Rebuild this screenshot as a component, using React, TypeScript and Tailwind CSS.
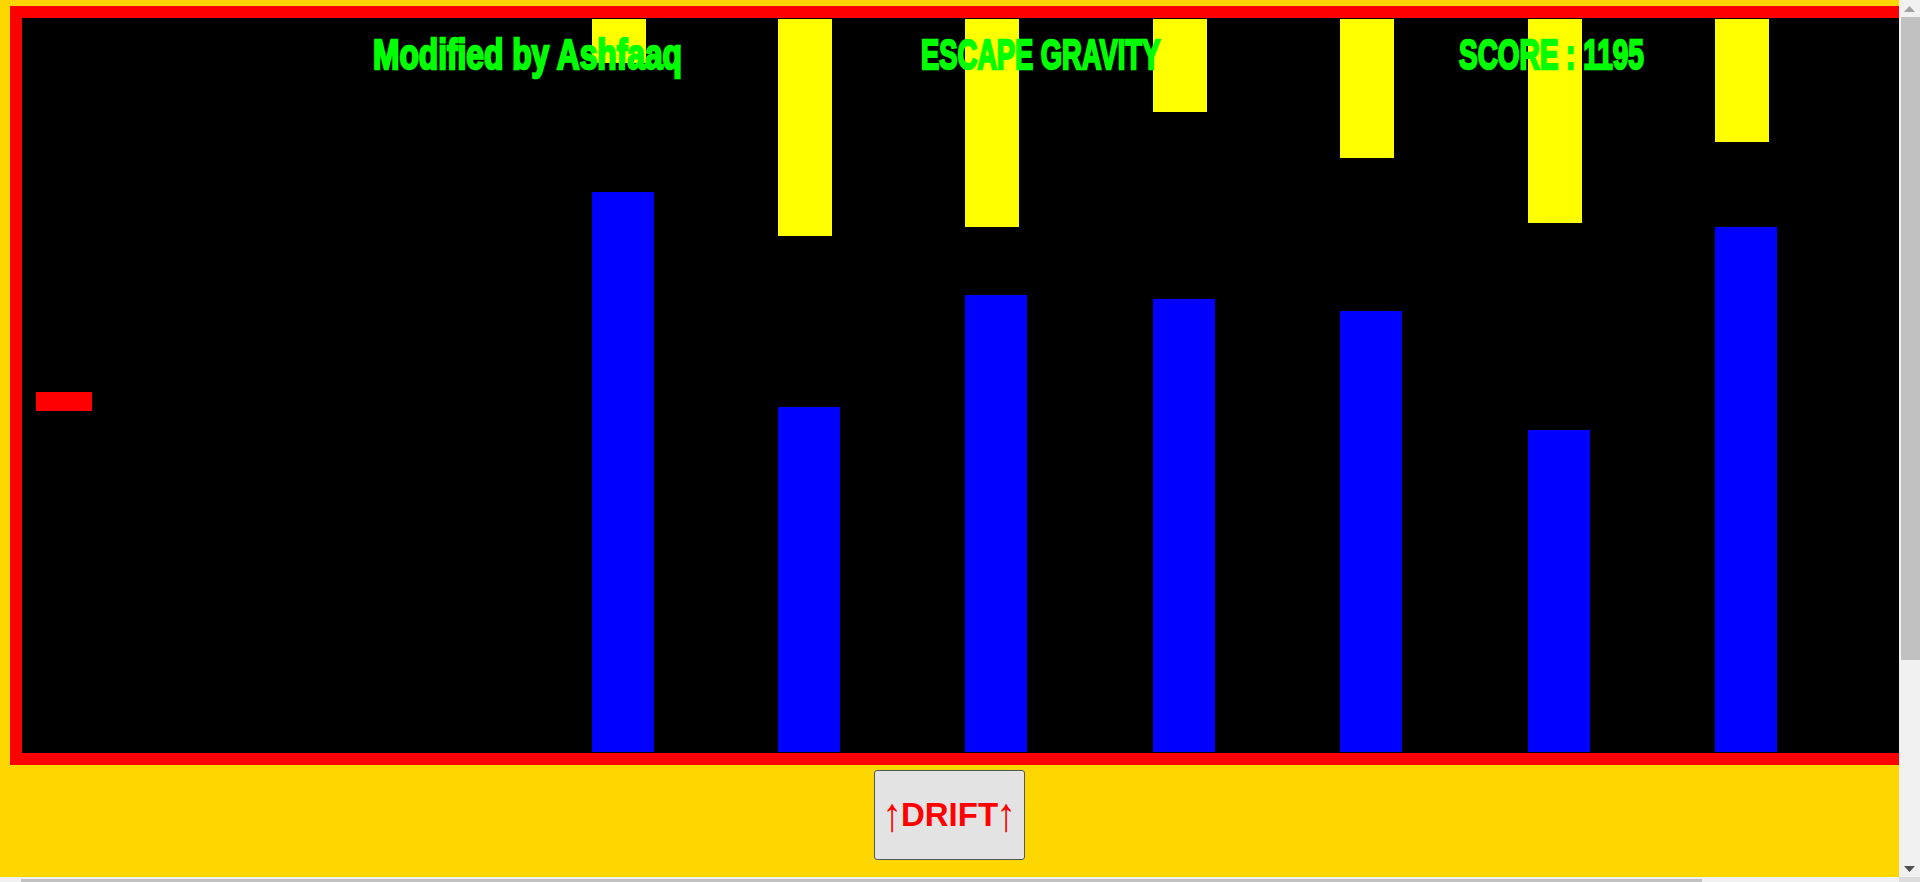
const columns = [
  { left: "left-[570px]", gapTop: "h-[44px]", blue: "h-[560px]" },
  { left: "left-[756px]", gapTop: "h-[217px]", blue: "h-[345px]" },
  { left: "left-[943px]", gapTop: "h-[208.3px]", blue: "h-[457px]" },
  { left: "left-[1131px]", gapTop: "h-[93.3px]", blue: "h-[453px]" },
  { left: "left-[1318px]", gapTop: "h-[139.3px]", blue: "h-[441px]" },
  { left: "left-[1506px]", gapTop: "h-[204.3px]", blue: "h-[322px]" },
  { left: "left-[1693px]", gapTop: "h-[123.3px]", blue: "h-[525px]" },
];

// no Impact on the box: squeeze bold Liberation Sans to the same widths
const labels = [
  { text: "Modified by Ashfaaq", left: "left-[351px]", squeeze: "scale-x-[0.755]" },
  { text: "ESCAPE GRAVITY", left: "left-[899px]", squeeze: "scale-x-[0.65]" },
  { text: "SCORE : 1195", left: "left-[1437px]", squeeze: "scale-x-[0.665]" },
];

export default function App() {
  return (
    <div className="flex h-[882px] w-full flex-col overflow-hidden bg-[#f1f1f1] font-['Liberation_Sans',Arial,sans-serif]">
      <div className="flex h-[877px]">
        {/* page */}
        <main className="flex w-[1899px] flex-col items-start overflow-hidden bg-[#ffd700] pt-[6px] pl-[10px]">
          <div className="relative h-[759px] w-[1950px] shrink-0 overflow-hidden border-[12px] border-[#ff0000] bg-black">
            {columns.map((c) => (
              <div key={c.left}>
                <div className={`absolute top-px w-[54px] bg-[#ffff00] ${c.left} ${c.gapTop}`} />
                <div className={`absolute bottom-px w-[62px] bg-[#0000ff] ${c.left} ${c.blue}`} />
              </div>
            ))}
            <div className="absolute top-[374px] left-[14px] h-[19px] w-[56px] bg-[#ff0000]" />
            {labels.map((l) => (
              <span
                key={l.text}
                className={`absolute top-[13px] origin-left text-[42px] leading-[48px] font-bold whitespace-nowrap text-[#00ff00] [-webkit-text-stroke:2.4px_#00ff00] ${l.left} ${l.squeeze}`}
              >
                {l.text}
              </span>
            ))}
          </div>
          <div className="flex w-[1879px] justify-center pt-[5px]">
            <button className="flex h-[90px] w-[151px] items-center justify-center rounded-[3px] border border-[#555555] bg-[#e3e3e3] text-[33px] font-bold whitespace-nowrap text-[#ff0000]">
              <span className="inline-block scale-x-[1.2] scale-y-[1.45] font-normal">↑</span>
              DRIFT
              <span className="inline-block scale-x-[1.2] scale-y-[1.45] font-normal">↑</span>
            </button>
          </div>
        </main>

        {/* vertical scrollbar */}
        <div className="flex w-[21px] flex-col items-end bg-[#f1f1f1]">
          <div className="flex h-[17px] w-full items-center justify-center">
            <svg width="11" height="6" viewBox="0 0 11 6">
              <path d="M5.5 0 11 6H0z" fill="#a3a3a3" />
            </svg>
          </div>
          <div className="h-[643px] w-[19px] bg-[#c1c1c1]" />
          <div className="flex-1" />
          <div className="flex h-[17px] w-full items-center justify-center">
            <svg width="11" height="6" viewBox="0 0 11 6">
              <path d="M0 0h11L5.5 6z" fill="#505050" />
            </svg>
          </div>
        </div>
      </div>

      {/* horizontal scrollbar, cut off by the bottom of the window */}
      <div className="flex h-[5px]">
        <div className="w-[1899px] pt-[2px] pl-[21px]">
          <div className="h-[3px] w-[1681px] bg-[#c1c1c1]" />
        </div>
        <div className="w-[21px] bg-[#dcdcdc]" />
      </div>
    </div>
  );
}
